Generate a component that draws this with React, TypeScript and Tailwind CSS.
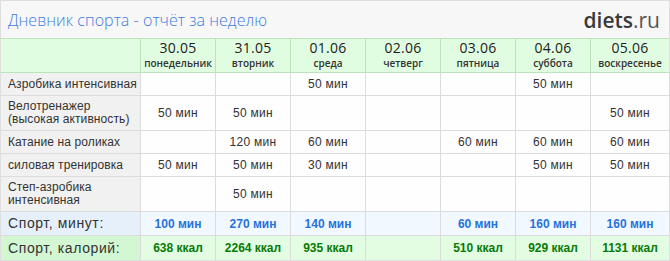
import React from "react";

const days = [
  { d: "30.05", n: "понедельник" },
  { d: "31.05", n: "вторник" },
  { d: "01.06", n: "среда" },
  { d: "02.06", n: "четверг" },
  { d: "03.06", n: "пятница" },
  { d: "04.06", n: "суббота" },
  { d: "05.06", n: "воскресенье" },
];

const rows: { label: string[]; vals: string[]; h: string }[] = [
  { label: ["Азробика интенсивная"], vals: ["", "", "50 мин", "", "", "50 мин", ""], h: "h-[22px]" },
  { label: ["Велотренажер", "(высокая активность)"], vals: ["50 мин", "50 мин", "", "", "", "", "50 мин"], h: "h-[34px]" },
  { label: ["Катание на роликах"], vals: ["", "120 мин", "60 мин", "", "60 мин", "60 мин", "60 мин"], h: "h-[22px]" },
  { label: ["силовая тренировка"], vals: ["50 мин", "50 мин", "30 мин", "", "", "50 мин", "50 мин"], h: "h-[22px]" },
  { label: ["Степ-азробика", "интенсивная"], vals: ["", "50 мин", "", "", "", "", ""], h: "h-[34px]" },
];

const minutes = ["100 мин", "270 мин", "140 мин", "", "60 мин", "160 мин", "160 мин"];
const kcal = ["638 ккал", "2264 ккал", "935 ккал", "", "510 ккал", "929 ккал", "1131 ккал"];

const grid = "grid grid-cols-[139px_repeat(6,74px)_1fr] gap-x-px";

export default function App() {
  return (
    <div className="w-[670px] h-[261px] border border-[#dedede] bg-white overflow-hidden" style={{ fontFamily: "'Liberation Sans', Arial, sans-serif" }}>
      <div className="h-[37px] bg-[#f7f7f7] flex items-center justify-between pl-[7px] pr-[9px]">
        <div className="text-[16px] text-[#3f7be0] font-light tracking-[0.05px] pt-[1px]" style={{ fontFamily: "'Open Sans', sans-serif" }}>
          Дневник спорта - отчёт за неделю
        </div>
        <div className="text-[21px] leading-none pt-[2px]" style={{ fontFamily: "'Open Sans', sans-serif" }}>
          <span className="font-semibold text-[#3a3a3a]">diets</span>
          <span className="text-[#555]">.ru</span>
        </div>
      </div>

      <div className={`${grid} bg-[#bde3bd] border-y border-[#bde3bd]`}>
        <div className="h-[33px] bg-[#e1fde1]" />
        {days.map((d) => (
          <div key={d.d} className="h-[33px] bg-[#e1fde1] flex flex-col items-center justify-end pb-[3px] text-[#222]" style={{ fontFamily: "'Open Sans', sans-serif" }}>
            <div className="text-[14px] leading-[16px] tracking-[0.3px] mb-[1px]">{d.d}</div>
            <div className="text-[10px] leading-[12px] font-semibold text-[#333]">{d.n}</div>
          </div>
        ))}
      </div>

      {rows.map((r, i) => (
        <div key={i} className={`${grid} bg-[#dcdcdc] border-b border-[#dcdcdc]`}>
          <div className={`${r.h} bg-[#f1f1f1] flex flex-col justify-center pl-[7px] text-[12px] leading-[13px] text-[#333] tracking-[0.1px] whitespace-nowrap`}>
            {r.label.map((l) => (
              <div key={l}>{l}</div>
            ))}
          </div>
          {r.vals.map((v, j) => (
            <div key={j} className={`${r.h} bg-[#fefefe] flex items-center justify-center text-[12px] text-[#333] tracking-[0.3px]`}>
              {v}
            </div>
          ))}
        </div>
      ))}

      <div className={`${grid} bg-[#dcdcdc] border-b border-[#dcdcdc]`}>
        <div className="h-[23px] bg-[#e6f0fb] flex items-center pl-[7px] text-[14px] text-[#333] tracking-[0.6px]">Спорт, минут:</div>
        {minutes.map((v, j) => (
          <div key={j} className="h-[23px] bg-[#f1f8ff] flex items-center justify-center text-[12px] font-bold text-[#2672d9]">
            {v}
          </div>
        ))}
      </div>

      <div className={`${grid} bg-[#dcdcdc] border-b border-[#dcdcdc]`}>
        <div className="h-[24px] bg-[#d3f6d3] flex items-center pl-[7px] text-[14px] text-[#333] tracking-[0.6px]">Спорт, калорий:</div>
        {kcal.map((v, j) => (
          <div key={j} className="h-[24px] bg-[#e3fde3] flex items-center justify-center text-[12px] font-bold text-[#077a07]">
            {v}
          </div>
        ))}
      </div>
    </div>
  );
}
